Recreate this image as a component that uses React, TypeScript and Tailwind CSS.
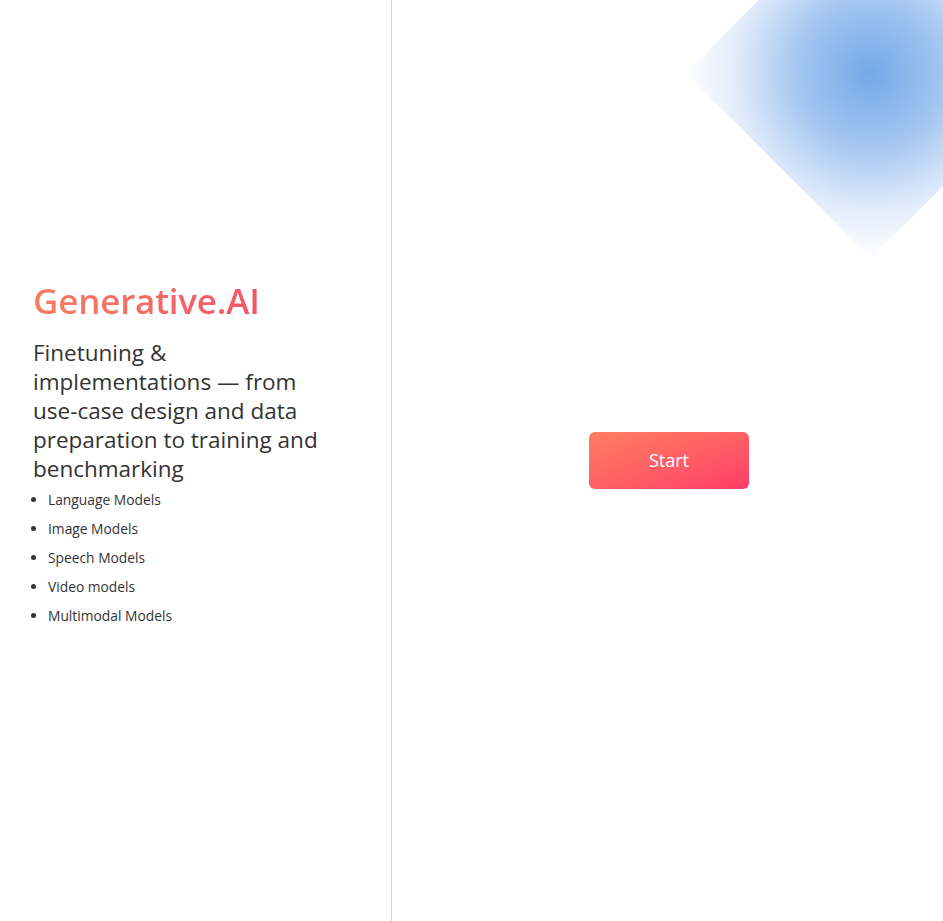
import React from "react";

export default function App() {
  const items = ["Language Models", "Image Models", "Speech Models", "Video models", "Multimodal Models"];
  return (
    <div className="relative flex h-[921px] w-full overflow-hidden bg-white" style={{ fontFamily: "'Open Sans', 'Noto Sans', sans-serif" }}>
      <div className="pointer-events-none absolute left-[740px] top-[-58px] h-[262px] w-[262px] rotate-45 bg-[radial-gradient(circle_at_center,#74a8e8_0%,#a4c6f0_40%,#e3edfb_75%,#ffffff_100%)]" />
      <div className="relative flex w-[392px] shrink-0 flex-col justify-center border-r border-[#d4d4d4] pb-[12px] pl-[33px] pr-[66px]">
        <h1 className="bg-gradient-to-r from-[#f77e5f] to-[#f1466a] bg-clip-text text-[35px] font-semibold leading-[44px] tracking-[-0.2px] text-transparent">
          Generative.AI
        </h1>
        <p className="mt-[15px] text-[22.5px] leading-[29px] text-[#333333]">
          Finetuning &amp;
          <br />
          implementations — from use-case design and data preparation to training and benchmarking
        </p>
        <ul className="mt-[2px] list-disc pl-[15px] text-[13.8px] leading-[29px] text-[#333333]">
          {items.map((t) => (
            <li key={t}>{t}</li>
          ))}
        </ul>
      </div>
      <div className="relative flex flex-1 items-center justify-center">
        <button className="ml-[3px] h-[57px] w-[160px] rounded-[6px] bg-gradient-to-br from-[#ff7d60] to-[#ff3a68] text-[18px] text-white">
          Start
        </button>
      </div>
    </div>
  );
}
